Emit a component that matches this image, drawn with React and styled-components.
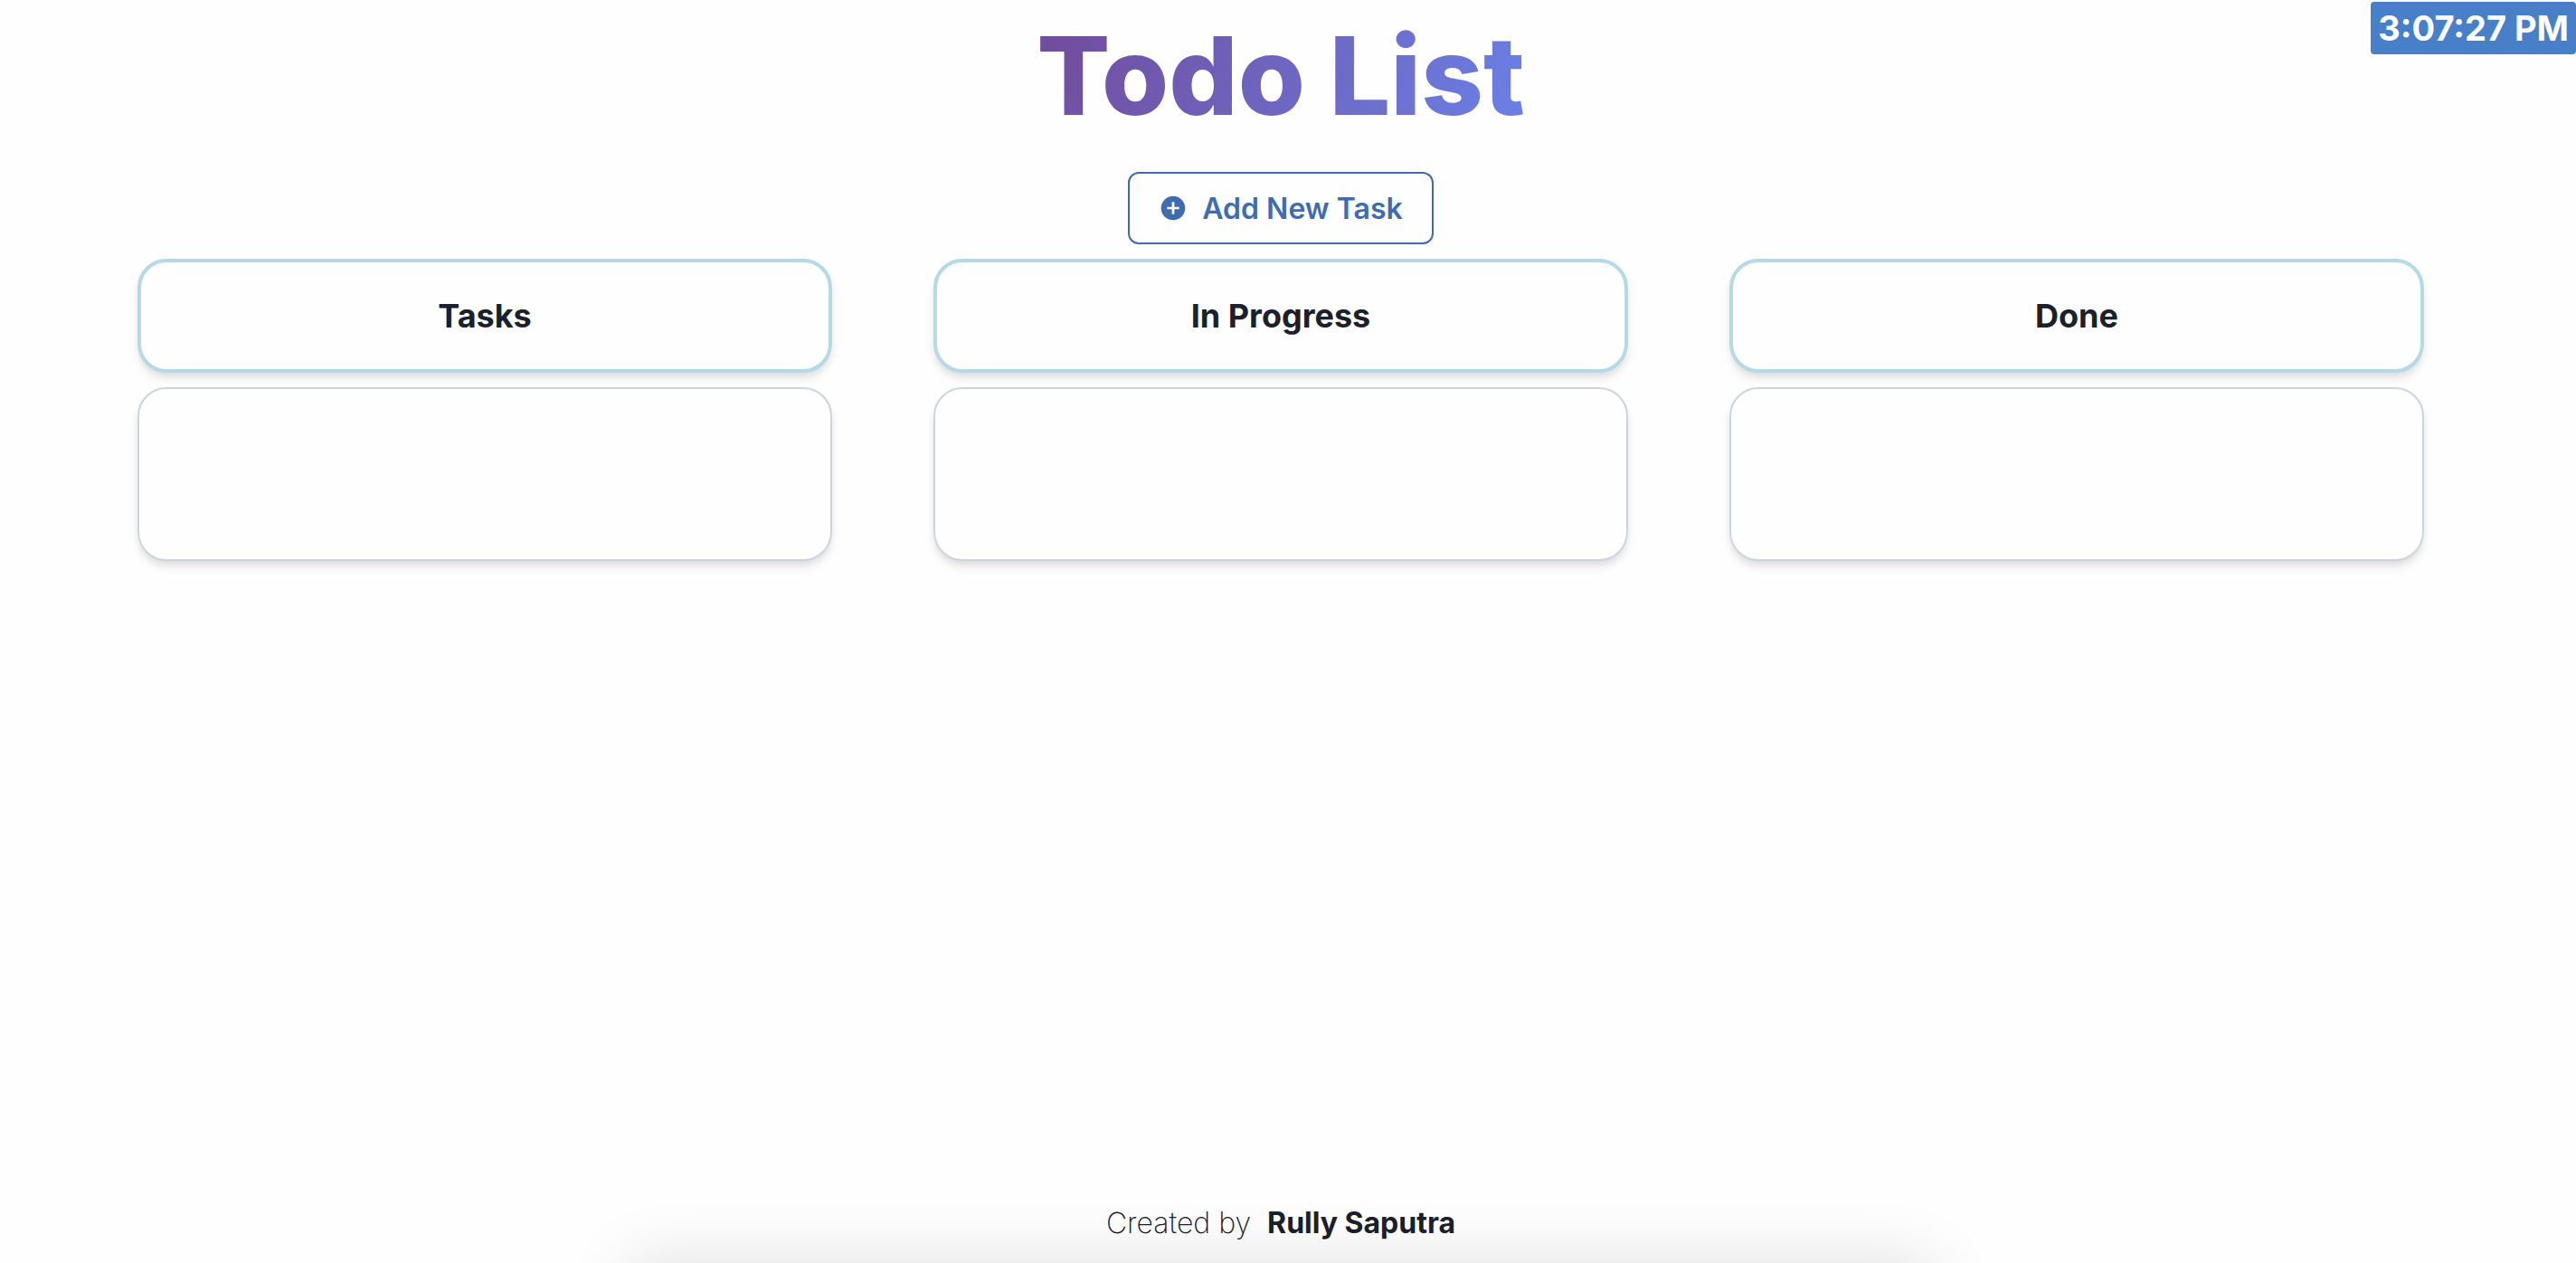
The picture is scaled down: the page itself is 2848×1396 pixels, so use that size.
import React from "react";
import styled, { createGlobalStyle } from "styled-components";
import { MdAddCircle } from "react-icons/md";

const GlobalStyle = createGlobalStyle`
  *, *::before, *::after { box-sizing: border-box; }
  body {
    margin: 0;
    background: #fefefe;
    color: #1a202c;
    font-family: Inter, "Liberation Sans", sans-serif;
    font-size: 32px;
  }
`;

const Page = styled.div`
  position: relative;
  display: flex;
  flex-direction: column;
  min-height: 100vh;
  padding: 24px 16px 20px 0;
  overflow: hidden;
`;

const Clock = styled.time`
  position: absolute;
  top: 2px;
  right: 0;
  padding: 0 8px;
  border-radius: 4px;
  background: #4780c8;
  color: #fff;
  font-size: 38px;
  font-weight: 700;
  line-height: 58px;
`;

const Header = styled.header`
  display: flex;
  flex-direction: column;
  align-items: center;
  gap: 46px;
`;

const Title = styled.h1`
  margin: 0;
  background: linear-gradient(110deg, #724b9b, #6a80e5);
  background-clip: text;
  color: transparent;
  font-size: 120px;
  font-weight: 800;
  line-height: 120px;
`;

const AddButton = styled.button`
  display: flex;
  align-items: center;
  gap: 16px;
  height: 80px;
  padding: 0 32px;
  border: 2px solid #3f6cae;
  border-radius: 12px;
  background: transparent;
  color: #3f6cae;
  font: inherit;
  font-weight: 600;
`;

const Board = styled.main`
  display: grid;
  grid-template-columns: repeat(3, 1fr);
  gap: 112px;
  padding: 16px 152px;
`;

const Column = styled.section`
  display: flex;
  flex-direction: column;
  gap: 16px;
`;

const Card = styled.div`
  border: 2px solid #cbd5e0;
  border-radius: 32px;
  box-shadow: 0 8px 12px -2px rgba(0, 0, 0, 0.1), 0 4px 8px -2px rgba(0, 0, 0, 0.06);
  background: #fefefe;
`;

const ColumnHeader = styled(Card)`
  padding: 32px;
  border: 4px solid #b5d9e5;
`;

const ColumnTitle = styled.h2`
  margin: 0;
  font-size: 36px;
  font-weight: 700;
  line-height: 54px;
  text-align: center;
`;

const TaskList = styled(Card)`
  min-height: 192px;
`;

const Footer = styled.footer`
  display: flex;
  justify-content: center;
  gap: 18px;
  margin-top: auto;
  line-height: 48px;
`;

const Credit = styled.span`
  font-weight: 200;
`;

const Author = styled.strong`
  font-weight: 700;
`;

const BottomGlow = styled.div`
  position: absolute;
  top: 100%;
  left: calc(25% - 16px);
  width: calc(50% + 16px);
  height: 200px;
  box-shadow: 0 0 72px rgba(0, 0, 0, 0.13);
`;

const columns = ["Tasks", "In Progress", "Done"];

export default function App() {
  return (
    <>
      <GlobalStyle />
      <Page>
        <Header>
          <Title>Todo List</Title>
          <AddButton type="button">
            <MdAddCircle size={32} aria-hidden="true" />
            Add New Task
          </AddButton>
        </Header>
        <Clock>3:07:27 PM</Clock>
        <Board>
          {columns.map((name) => (
            <Column key={name}>
              <ColumnHeader>
                <ColumnTitle>{name}</ColumnTitle>
              </ColumnHeader>
              <TaskList />
            </Column>
          ))}
        </Board>
        <Footer>
          <Credit>Created by</Credit>
          <Author>Rully Saputra</Author>
        </Footer>
        <BottomGlow />
      </Page>
    </>
  );
}
